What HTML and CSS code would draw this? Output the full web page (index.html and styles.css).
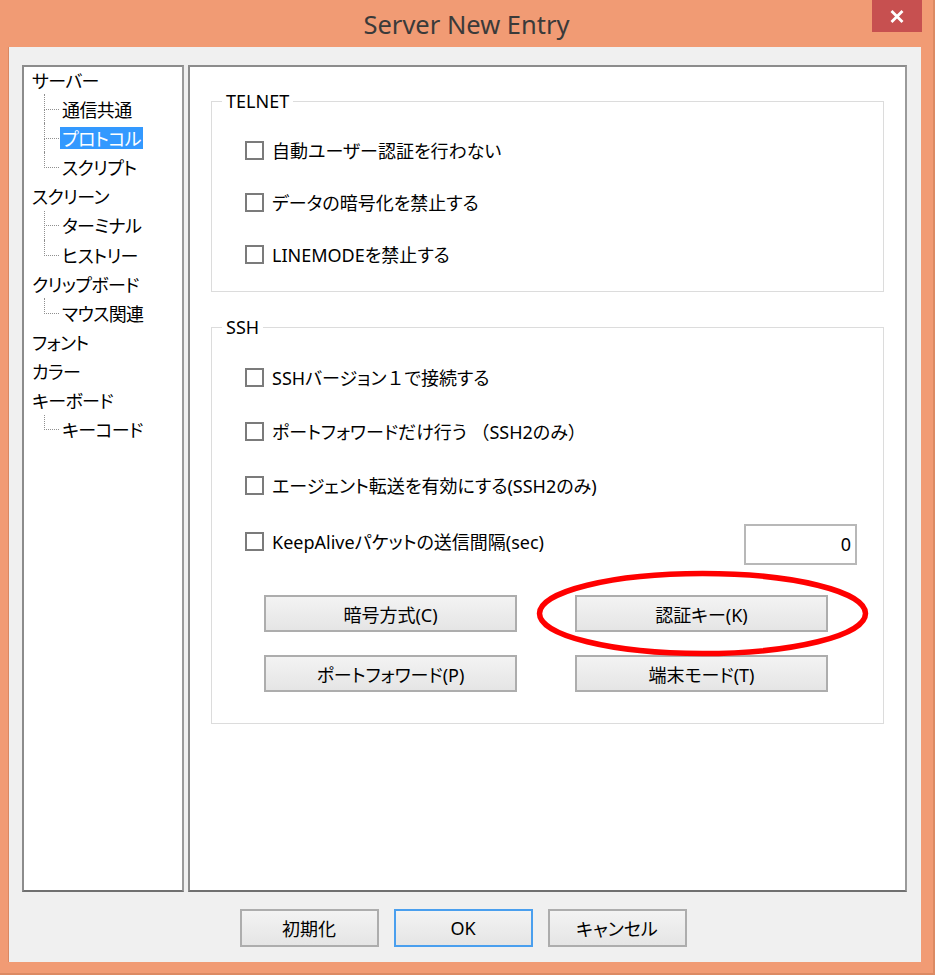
FILE: index.html
```html
<!DOCTYPE html>
<html lang="ja">
<head>
<meta charset="utf-8">
<title>Server New Entry</title>
<link rel="stylesheet" href="styles.css">
</head>
<body>
<div class="window">
  <header class="titlebar">
    <span class="title">Server New Entry</span>
    <span class="close" aria-label="閉じる">
      <svg width="14" height="13" viewBox="0 0 14 13"><path d="M1.5 1 L12.5 12 M12.5 1 L1.5 12" stroke="#fff" stroke-width="2.8" fill="none"/></svg>
    </span>
  </header>
  <div class="client">
    <div class="panes">
      <ul class="tree">
        <li><div class="row"><span class="lbl">サーバー</span></div>
          <ul class="kids">
            <li><div class="row"><span class="lbl">通信共通</span></div></li>
            <li><div class="row"><span class="lbl sel">プロトコル</span></div></li>
            <li><div class="row"><span class="lbl">スクリプト</span></div></li>
          </ul>
        </li>
        <li><div class="row"><span class="lbl">スクリーン</span></div>
          <ul class="kids">
            <li><div class="row"><span class="lbl">ターミナル</span></div></li>
            <li><div class="row"><span class="lbl">ヒストリー</span></div></li>
          </ul>
        </li>
        <li><div class="row"><span class="lbl">クリップボード</span></div>
          <ul class="kids">
            <li><div class="row"><span class="lbl">マウス関連</span></div></li>
          </ul>
        </li>
        <li><div class="row"><span class="lbl">フォント</span></div></li>
        <li><div class="row"><span class="lbl">カラー</span></div></li>
        <li><div class="row"><span class="lbl">キーボード</span></div>
          <ul class="kids">
            <li><div class="row"><span class="lbl">キーコード</span></div></li>
          </ul>
        </li>
      </ul>
      <div class="page">
        <fieldset class="group telnet">
          <legend>TELNET</legend>
          <label class="check"><span class="box"></span><span>自動ユーザー認証を行わない</span></label>
          <label class="check"><span class="box"></span><span>データの暗号化を禁止する</span></label>
          <label class="check"><span class="box"></span><span>LINEMODEを禁止する</span></label>
        </fieldset>
        <fieldset class="group ssh">
          <legend>SSH</legend>
          <label class="check"><span class="box"></span><span>SSHバージョン<span class="fw">１</span>で接続する</span></label>
          <label class="check"><span class="box"></span><span>ポートフォワードだけ行う <span class="fw">（</span>SSH2のみ<span class="fw">）</span></span></label>
          <label class="check"><span class="box"></span><span>エージェント転送を有効にする(SSH2のみ)</span></label>
          <div class="keepalive">
            <label class="check"><span class="box"></span><span>KeepAliveパケットの送信間隔(sec)</span></label>
            <div class="field">0</div>
          </div>
          <div class="btngrid">
            <div class="btn">暗号方式(C)</div>
            <div class="btn">認証キー(K)</div>
            <div class="btn">ポートフォワード(P)</div>
            <div class="btn">端末モード(T)</div>
          </div>
        </fieldset>
      </div>
    </div>
    <div class="actions">
      <div class="btn dlg">初期化</div>
      <div class="btn dlg default">OK</div>
      <div class="btn dlg">キャンセル</div>
    </div>
  </div>
  <svg class="mark" width="340" height="92" viewBox="0 0 340 92"><ellipse cx="168.5" cy="45.5" rx="163" ry="40" fill="none" stroke="#ff0000" stroke-width="5.5"/></svg>
</div>
</body>
</html>
```
FILE: styles.css
```css
* { box-sizing: border-box; }
html, body { margin: 0; padding: 0; }
body {
  width: 935px;
  height: 975px;
  overflow: hidden;
  background: #f19b74;
  font-family: "Noto Sans", "Noto Sans CJK JP", sans-serif;
  font-feature-settings: "palt";
  color: #000;
}
.window {
  position: relative;
  width: 935px;
  height: 975px;
  display: flex;
  flex-direction: column;
  border-right: 2px solid #dc8a63;
  border-bottom: 2px solid #dc8a63;
}
.titlebar {
  height: 47px;
  display: grid;
  grid-template-columns: 1fr auto 1fr;
  align-items: start;
}
.title {
  grid-column: 2;
  font-family: "Noto Sans", "Open Sans", sans-serif;
  font-feature-settings: normal;
  font-size: 25.5px;
  line-height: 48px;
  color: #3a3a3a;
}
.close {
  grid-column: 3;
  justify-self: end;
  margin-right: 11px;
  width: 50px;
  height: 32px;
  background: #c75050;
  display: flex;
  align-items: center;
  justify-content: center;
}
.client {
  margin: 0 12px 11px 8px;
  flex: 1;
  background: #f0f0f0;
  border-left: 1px solid #d98862;
  padding: 18px 14px 15px 13px;
  display: flex;
  flex-direction: column;
}
.panes {
  height: 827px;
  display: flex;
  gap: 4px;
}
.tree, .page {
  background: #fff;
  border: 2px solid #858585;
  border-color: #8c8c8c #9a9a9a #707070 #8c8c8c;
}
.tree {
  width: 162px;
  margin: 0;
  padding: 0 0 0 6px;
  list-style: none;
}
.tree ul { list-style: none; margin: 0; }
.tree > li:first-child > .row { margin-top: -2px; }
.row {
  height: 29.17px;
  display: flex;
  align-items: center;
}
.lbl {
  font-family: "Noto Sans CJK JP", sans-serif;
  font-size: 18px;
  line-height: 22px;
  padding: 0 2px;
  letter-spacing: -0.6px;
  white-space: nowrap;
}
.lbl.sel {
  background: #3399ff;
  color: #fff;
}
.kids { padding-left: 30px; }
.kids li { position: relative; }
.kids li::before {
  content: "";
  position: absolute;
  left: -16px;
  top: 0;
  height: 50%;
  width: 14px;
  border-left: 1px dotted #8f8f8f;
  border-bottom: 1px dotted #8f8f8f;
}
.kids li:not(:last-child)::after {
  content: "";
  position: absolute;
  left: -16px;
  top: 50%;
  bottom: 0;
  border-left: 1px dotted #8f8f8f;
}
.page {
  flex: 1;
  padding: 23px 21px 0 21px;
}
.group {
  margin: 0;
  border: 1px solid #dcdcdc;
  padding: 0;
  min-width: 0;
  display: flex;
  flex-direction: column;
}
.group legend {
  margin-left: -23px;
  padding: 0 4px;
  font-size: 18px;
  line-height: 22px;
}
.telnet {
  padding: 23px 0 22px 33px;
  gap: 22px;
}
.ssh {
  margin-top: 24px;
  padding: 24px 26px 31px 33px;
  gap: 24px;
}
.check {
  height: 30px;
  display: flex;
  align-items: center;
  gap: 8px;
  font-size: 18px;
  white-space: nowrap;
}
.fw { font-feature-settings: normal; }
.box {
  width: 19px;
  height: 19px;
  border: 2px solid #7b7b7b;
  background: #fff;
  flex: none;
}
.keepalive {
  display: flex;
  align-items: flex-start;
  justify-content: space-between;
}
.keepalive .check { margin-top: 2px; }
.field {
  width: 113px;
  height: 41px;
  border: 2px solid #b8b8b8;
  background: #fff;
  font-size: 18px;
  text-align: right;
  line-height: 37px;
  padding-right: 4px;
}
.btngrid {
  margin-top: 6px;
  padding-left: 19px;
  display: grid;
  grid-template-columns: 253px 253px;
  column-gap: 58px;
  row-gap: 23px;
}
.btn {
  height: 37px;
  border: 2px solid #adadad;
  background: linear-gradient(#f3f3f3, #e5e5e5);
  display: flex;
  align-items: center;
  justify-content: center;
  font-size: 18px;
  white-space: nowrap;
}
.actions {
  margin-top: 17px;
  display: flex;
  justify-content: center;
  gap: 15px;
  padding-right: 3px;
}
.btn.dlg {
  width: 139px;
  height: 38px;
}
.btn.default { border-color: #4a9fee; }
.mark {
  position: absolute;
  left: 534px;
  top: 568px;
}
```
